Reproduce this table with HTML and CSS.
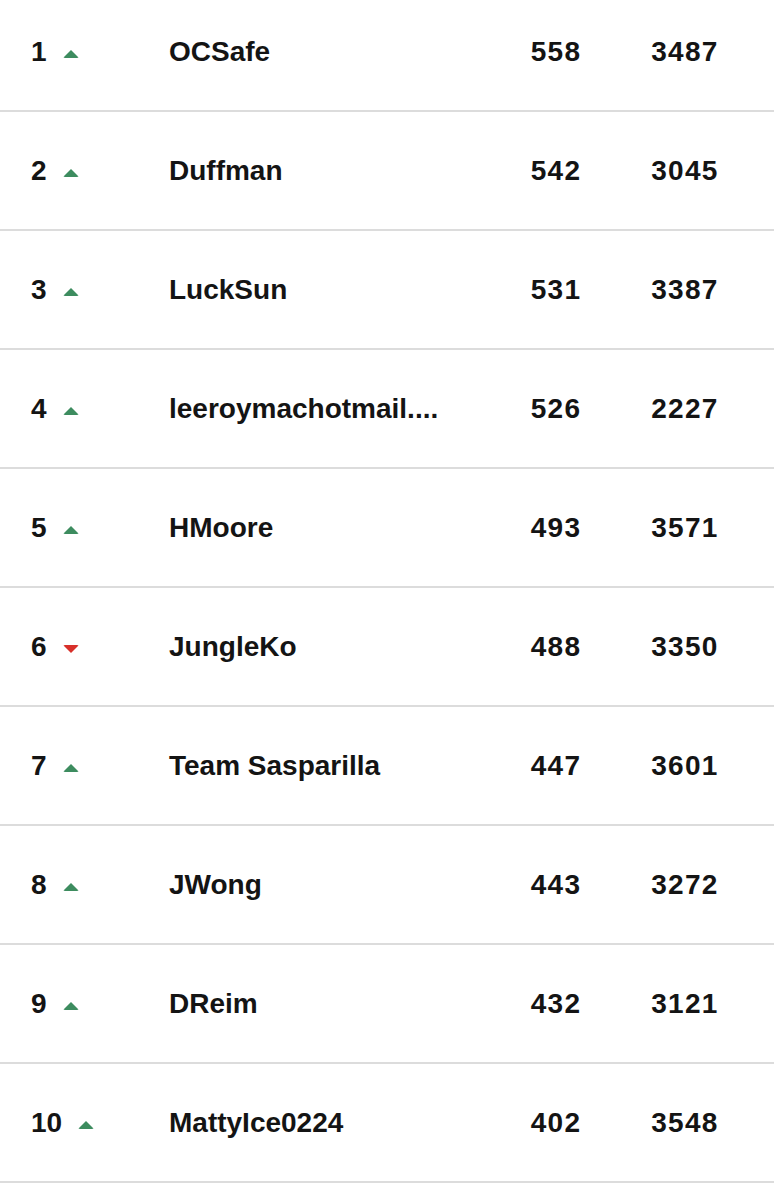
FILE: index.html
```html
<!DOCTYPE html>
<html lang="en">
<head>
<meta charset="utf-8">
<title>Leaderboard</title>
<link rel="stylesheet" href="styles.css">
</head>
<body>
<div class="board">
  <div class="row"><div class="rank"><span class="num">1</span><span class="tri up"></span></div><div class="name">OCSafe</div><div class="score">558</div><div class="total">3487</div></div>
  <div class="row"><div class="rank"><span class="num">2</span><span class="tri up"></span></div><div class="name">Duffman</div><div class="score">542</div><div class="total">3045</div></div>
  <div class="row"><div class="rank"><span class="num">3</span><span class="tri up"></span></div><div class="name">LuckSun</div><div class="score">531</div><div class="total">3387</div></div>
  <div class="row"><div class="rank"><span class="num">4</span><span class="tri up"></span></div><div class="name">leeroymachotmail....</div><div class="score">526</div><div class="total">2227</div></div>
  <div class="row"><div class="rank"><span class="num">5</span><span class="tri up"></span></div><div class="name">HMoore</div><div class="score">493</div><div class="total">3571</div></div>
  <div class="row"><div class="rank"><span class="num">6</span><span class="tri down"></span></div><div class="name">JungleKo</div><div class="score">488</div><div class="total">3350</div></div>
  <div class="row"><div class="rank"><span class="num">7</span><span class="tri up"></span></div><div class="name">Team Sasparilla</div><div class="score">447</div><div class="total">3601</div></div>
  <div class="row"><div class="rank"><span class="num">8</span><span class="tri up"></span></div><div class="name">JWong</div><div class="score">443</div><div class="total">3272</div></div>
  <div class="row"><div class="rank"><span class="num">9</span><span class="tri up"></span></div><div class="name">DReim</div><div class="score">432</div><div class="total">3121</div></div>
  <div class="row"><div class="rank"><span class="num">10</span><span class="tri up"></span></div><div class="name">MattyIce0224</div><div class="score">402</div><div class="total">3548</div></div>
</div>
</body>
</html>
```

FILE: styles.css
```css
html, body {
  margin: 0;
  padding: 0;
  background: #ffffff;
}

body {
  font-family: "Liberation Sans", Arial, sans-serif;
  color: #141414;
}

.board {
  margin-top: -7px;
}

.row {
  display: grid;
  grid-template-columns: 138px 337px 100px 158px;
  align-items: center;
  height: 117px;
  padding-left: 31px;
  border-bottom: 2px solid #dcdcdc;
  font-size: 28px;
  font-weight: 700;
}

.rank {
  display: flex;
  align-items: center;
  gap: 16px;
}

.tri {
  width: 0;
  height: 0;
  border-left: 8px solid transparent;
  border-right: 8px solid transparent;
  margin-top: 4px;
}

.tri.up {
  border-bottom: 8px solid #3d8c5f;
  border-radius: 2px;
}

.tri.down {
  border-top: 8px solid #d8302a;
  border-radius: 2px;
}

.name {
  white-space: nowrap;
}

.score,
.total {
  text-align: center;
  letter-spacing: 1.3px;
}
```
